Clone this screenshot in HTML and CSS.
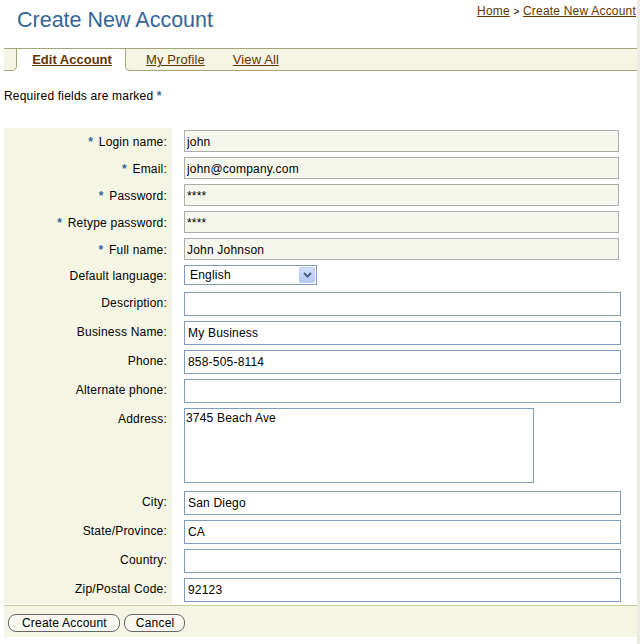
FILE: index.html
```html
<!DOCTYPE html>
<html>
<head>
<meta charset="utf-8">
<title>Create New Account</title>
<link rel="stylesheet" href="styles.css">
</head>
<body>
<div class="page">
  <header class="header">
    <h1 class="title">Create New Account</h1>
    <nav class="crumbs"><a href="#">Home</a> <span class="sep">&gt;</span> <a href="#">Create New Account</a></nav>
  </header>

  <div class="tabbar">
    <div class="tab-edge"></div>
    <div class="tab-active"><a href="#">Edit Account</a></div>
    <div class="tab-rest">
      <a href="#" class="tab-link">My Profile</a>
      <a href="#" class="tab-link">View All</a>
    </div>
  </div>

  <p class="req">Required fields are marked <span class="star">*</span></p>

  <form class="form">
    <div class="row ro">
      <label class="lbl"><span class="star">*</span> Login name:</label>
      <div class="fld"><input class="in-ro" type="text" value="john" readonly></div>
    </div>
    <div class="row ro">
      <label class="lbl"><span class="star">*</span> Email:</label>
      <div class="fld"><input class="in-ro" type="text" value="john@company.com" readonly></div>
    </div>
    <div class="row ro">
      <label class="lbl"><span class="star">*</span> Password:</label>
      <div class="fld"><input class="in-ro" type="text" value="****" readonly></div>
    </div>
    <div class="row ro">
      <label class="lbl"><span class="star">*</span> Retype password:</label>
      <div class="fld"><input class="in-ro" type="text" value="****" readonly></div>
    </div>
    <div class="row ro">
      <label class="lbl"><span class="star">*</span> Full name:</label>
      <div class="fld"><input class="in-ro" type="text" value="John Johnson" readonly></div>
    </div>
    <div class="row sel">
      <label class="lbl">Default language:</label>
      <div class="fld">
        <div class="select-wrap">
          <select class="select"><option>English</option></select>
          <span class="sel-btn"><svg width="9" height="6" viewBox="0 0 9 6"><path d="M1 1 L4.5 4.5 L8 1" fill="none" stroke="#4d6185" stroke-width="2"/></svg></span>
        </div>
      </div>
    </div>
    <div class="row txt">
      <label class="lbl">Description:</label>
      <div class="fld"><input class="in" type="text" value=""></div>
    </div>
    <div class="row txt">
      <label class="lbl">Business Name:</label>
      <div class="fld"><input class="in" type="text" value="My Business"></div>
    </div>
    <div class="row txt">
      <label class="lbl">Phone:</label>
      <div class="fld"><input class="in" type="text" value="858-505-8114"></div>
    </div>
    <div class="row txt">
      <label class="lbl">Alternate phone:</label>
      <div class="fld"><input class="in" type="text" value=""></div>
    </div>
    <div class="row area">
      <label class="lbl">Address:</label>
      <div class="fld"><textarea class="ta">3745 Beach Ave</textarea></div>
    </div>
    <div class="row txt">
      <label class="lbl">City:</label>
      <div class="fld"><input class="in" type="text" value="San Diego"></div>
    </div>
    <div class="row txt">
      <label class="lbl">State/Province:</label>
      <div class="fld"><input class="in" type="text" value="CA"></div>
    </div>
    <div class="row txt">
      <label class="lbl">Country:</label>
      <div class="fld"><input class="in" type="text" value=""></div>
    </div>
    <div class="row txt">
      <label class="lbl">Zip/Postal Code:</label>
      <div class="fld"><input class="in" type="text" value="92123"></div>
    </div>
  </form>

  <div class="footer">
    <button class="btn" type="button">Create Account</button>
    <button class="btn btn-short" type="button">Cancel</button>
  </div>
</div>
</body>
</html>
```

FILE: styles.css
```css
html {
  background: #ebebe4;
  margin: 0;
  padding: 0;
}
body {
  margin: 0;
  padding: 0;
  font-family: "Liberation Sans", Arial, sans-serif;
  font-size: 12px;
  letter-spacing: 0.2px;
  color: #000;
}
.page {
  width: 637px;
  min-height: 644px;
  background: #fff;
  box-sizing: border-box;
  padding-left: 4px;
}
.header {
  display: flex;
  justify-content: space-between;
  align-items: flex-start;
  height: 48px;
}
.title {
  margin: 8px 0 0 13px;
  font-size: 21.5px;
  line-height: 25px;
  font-weight: normal;
  letter-spacing: 0;
  color: #336699;
}
.crumbs {
  margin: 4px 1px 0 0;
  font-size: 12px;
  line-height: 14px;
  letter-spacing: 0.2px;
}
.crumbs a {
  color: #663300;
  text-decoration: underline;
}
.crumbs .sep {
  font-size: 10px;
  color: #000;
}

.tabbar {
  display: flex;
  height: 23px;
  font-size: 13px;
  letter-spacing: 0;
}
.tab-edge {
  width: 13px;
  flex: none;
  box-sizing: border-box;
  background: #f5f5e6;
  border-top: 1px solid #a3a37c;
  border-bottom: 1px solid #a3a37c;
  border-right: 1px solid #a3a37c;
  border-bottom-right-radius: 5px;
}
.tab-active {
  width: 108px;
  flex: none;
  box-sizing: border-box;
  border-top: 1px solid #a3a37c;
  background: #fff;
  text-align: center;
  line-height: 21px;
  padding-left: 2px;
}
.tab-active a {
  color: #663300;
  font-weight: bold;
}
.tab-rest {
  flex: 1;
  display: flex;
  gap: 28px;
  box-sizing: border-box;
  background: #f5f5e6;
  border-top: 1px solid #a3a37c;
  border-bottom: 1px solid #a3a37c;
  border-left: 1px solid #a3a37c;
  border-bottom-left-radius: 5px;
  padding-left: 20px;
  line-height: 21px;
}
.tab-link {
  color: #663300;
  letter-spacing: 0.1px;
}

.req {
  margin: 17px 0 0 0;
  line-height: 16px;
}
.star {
  color: #336699;
  font-weight: bold;
  margin-right: 2px;
}

.form {
  margin-top: 24px;
  display: flex;
  flex-direction: column;
}
.row {
  display: flex;
}
.lbl {
  width: 168px;
  flex: none;
  box-sizing: border-box;
  background: #f5f5e6;
  text-align: right;
  padding-right: 5px;
  line-height: 22px;
  white-space: nowrap;
}
.fld {
  padding-left: 12px;
}
.row.ro .fld { padding-top: 2px; padding-bottom: 3px; }
.row.ro .lbl { padding-top: 3px; padding-bottom: 2px; }
.row.sel .fld { padding-top: 2px; padding-bottom: 4px; }
.row.sel .lbl { padding-top: 3px; padding-bottom: 3px; line-height: 20px; }
.row.txt .lbl, .row.txt .fld { padding-top: 3px; padding-bottom: 2px; }
.row.txt .lbl { line-height: 23px; }
.row.area .lbl, .row.area .fld { padding-top: 3px; padding-bottom: 5px; }
.row.area .lbl { line-height: 23px; }

input, textarea, select, button {
  font-family: "Liberation Sans", Arial, sans-serif;
  font-size: 12px;
  letter-spacing: 0.2px;
  color: #000;
}
.in-ro {
  display: block;
  box-sizing: border-box;
  width: 435px;
  height: 22px;
  margin: 0;
  padding: 1px 2px 0;
  border: 1px solid #adadad;
  background: #f6f7ec;
  outline: none;
}
.in {
  display: block;
  box-sizing: border-box;
  width: 437px;
  height: 24px;
  margin: 0;
  padding: 0 3px;
  border: 1px solid #7f9db9;
  background: #fff;
  outline: none;
}
.select-wrap {
  position: relative;
  width: 133px;
  height: 20px;
}
.select {
  display: block;
  box-sizing: border-box;
  width: 133px;
  height: 20px;
  margin: 0;
  padding: 0 0 0 5px;
  border: 1px solid #7f9db9;
  background: #fff;
  -webkit-appearance: none;
  appearance: none;
  border-radius: 0;
  outline: none;
}
.sel-btn {
  position: absolute;
  right: 2px;
  top: 2px;
  width: 16px;
  height: 16px;
  box-sizing: border-box;
  border: 1px solid #bacdf6;
  border-radius: 2px;
  background: linear-gradient(#d2defb, #b5c8f4);
  display: flex;
  align-items: center;
  justify-content: center;
  pointer-events: none;
}
.ta {
  display: block;
  box-sizing: border-box;
  width: 350px;
  height: 75px;
  margin: 0;
  padding: 2px 1px;
  border: 1px solid #7f9db9;
  resize: none;
  overflow: hidden;
  outline: none;
  line-height: 14px;
}

.footer {
  margin-top: 1px;
  border-top: 1px solid #cccc99;
  background: #f5f5e6;
  padding: 8px 4px 5px;
  display: flex;
  gap: 4px;
}
.btn {
  height: 18px;
  margin: 0;
  padding: 0 12px 0 13px;
  border: 1px solid #666;
  border-radius: 8px;
  background: #f8f8f0;
  line-height: 16px;
  cursor: pointer;
}
.btn-short {
  padding: 0 10px 0 11px;
}
```
